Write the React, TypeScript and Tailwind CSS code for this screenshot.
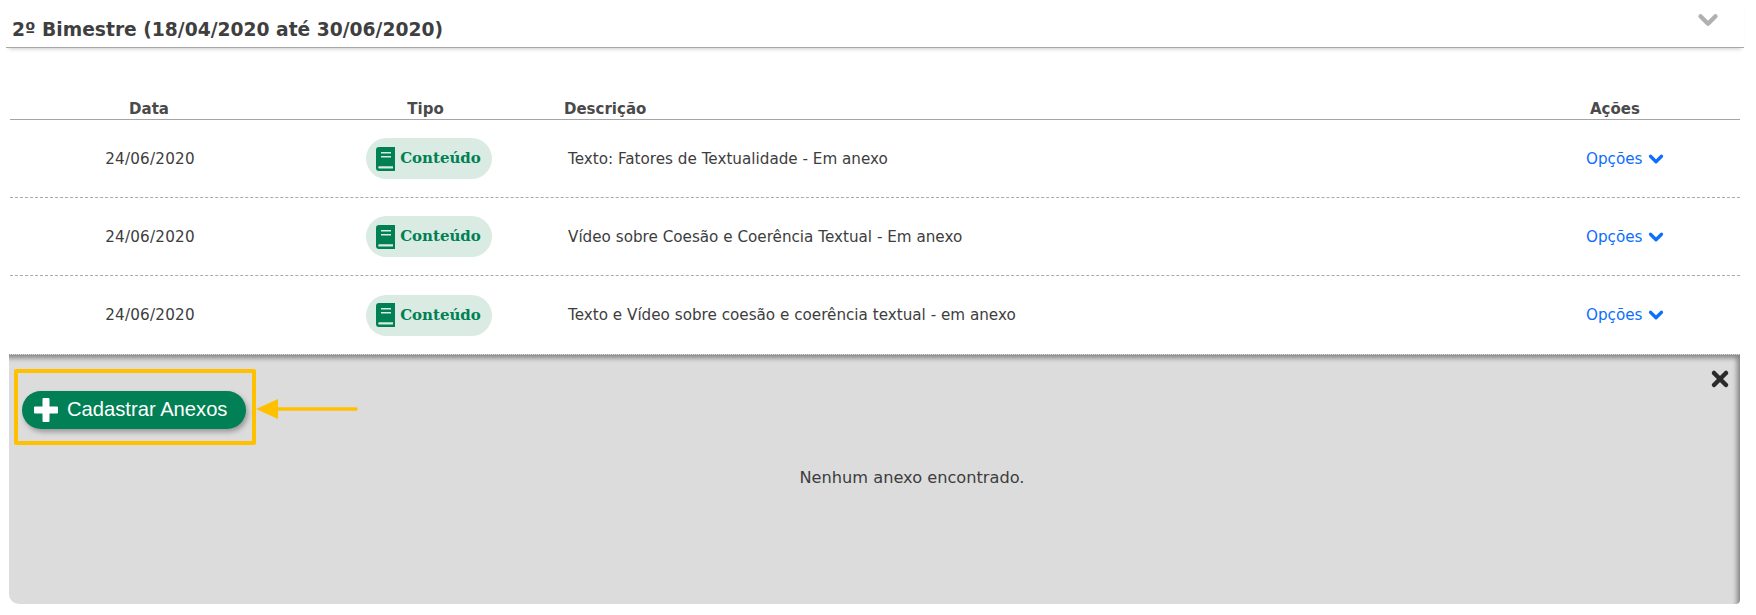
import { ChevronDown, X } from "lucide-react";

const rows = [
  "Texto: Fatores de Textualidade - Em anexo",
  "Vídeo sobre Coesão e Coerência Textual - Em anexo",
  "Texto e Vídeo sobre coesão e coerência textual - em anexo",
];

const cols = "grid grid-cols-[280px_271px_1fr_252px] items-center";

function BookIcon() {
  return (
    <svg width="19" height="24" viewBox="0 0 19 24" className="shrink-0">
      <path
        fill="#008054"
        fillRule="evenodd"
        d="M3 0h16v24H3a3 3 0 0 1-3-3V3a3 3 0 0 1 3-3zM5 5v1.6h10V5zm0 4v1.6h10V9zM3 19.2a1.3 1.3 0 0 0 0 2.4h14v-2.4z"
      />
    </svg>
  );
}

function PlusIcon() {
  return (
    <svg width="24" height="24" viewBox="0 0 24 24" className="shrink-0">
      <path fill="#ffffff" d="M8.5 1a1 1 0 0 1 1-1h5a1 1 0 0 1 1 1v7.500h7.500a1 1 0 0 1 1 1v5a1 1 0 0 1-1 1h-7.500V23a1 1 0 0 1-1 1h-5a1 1 0 0 1-1-1v-7.500H1a1 1 0 0 1-1-1v-5a1 1 0 0 1 1-1h7.500z" />
    </svg>
  );
}

function Row({ text, last }: { text: string; last: boolean }) {
  return (
    <div className={`${cols} h-[78px] text-[15.2px] text-[#3d3d3d] ${last ? "" : "border-b border-dashed border-[#aaaaaa]"}`}>
      <div className="pt-[1px] text-center tracking-[0.2px]">24/06/2020</div>
      <div className="flex justify-center pl-[6px]">
        <span className="flex h-[41px] w-[126px] items-center justify-center gap-[5px] rounded-full bg-[#d9ebe3] font-['DejaVu_Serif',serif] text-[15px] font-bold text-[#008054]">
          <BookIcon />
          Conteúdo
        </span>
      </div>
      <div className="pl-[7px] pt-[1px]">{text}</div>
      <div className="flex items-center pl-[98px] pt-[1px] text-[#0d6efd]">
        Opções
        <ChevronDown size={22} strokeWidth={3.5} className="ml-[2px]" />
      </div>
    </div>
  );
}

export default function App() {
  return (
    <div className="h-[615px] overflow-hidden bg-white font-['DejaVu_Sans',sans-serif]">
      <div className="ml-[6px] mr-[12px] flex h-[48px] items-start justify-between border-b border-[#a8a8a8] pl-[6px] pr-[21px] pt-[18px] shadow-[0_4px_4px_-3px_rgba(0,0,0,0.2)]">
        <h2 className="text-[18.7px] font-bold leading-[24px] text-[#3f3f3f]">2º Bimestre (18/04/2020 até 30/06/2020)</h2>
        <ChevronDown size={30} strokeWidth={3.5} className="-mt-[13px] text-[#b0b0b0]" />
      </div>

      <div className="ml-[10px] mr-[16px] mt-[48px]">
        <div className={`${cols} h-[24px] border-b border-[#a5a5a5] pt-[2px] text-[15px] font-bold text-[#4a4a4a]`}>
          <div className="pr-[2px] text-center">Data</div>
          <div className="text-center">Tipo</div>
          <div className="pl-[3px]">Descrição</div>
          <div className="pl-[102px]">Ações</div>
        </div>
        {rows.map((r, i) => (
          <Row key={r} text={r} last={i === rows.length - 1} />
        ))}
      </div>

      <div className="relative ml-[9px] mr-[16px] h-[250px] rounded-bl-[10px] rounded-br-[4px] border-t border-dotted border-[#999999] bg-[#dcdcdc] pl-[13px] pt-[36px] shadow-[inset_-5px_5px_5px_-2px_rgba(0,0,0,0.4)]">
        <button className="flex h-[38px] w-[224px] items-center rounded-full bg-[#008054] pl-[12px] font-['Liberation_Sans',sans-serif] text-[20.2px] text-white shadow-[2px_3px_5px_rgba(0,0,0,0.3)]">
          <PlusIcon />
          <span className="ml-[9px] -translate-y-[1px]">Cadastrar Anexos</span>
        </button>
        <p className="mt-[37px] pl-[62px] text-center text-[16.2px] text-[#3d3d3d]">Nenhum anexo encontrado.</p>

        <X size={24} strokeWidth={4.5} className="absolute right-[8px] top-[12px] text-[#2b2b2b]" />

        {/* annotation box and arrow from the original screenshot */}
        <div className="absolute left-[5px] top-[14px] h-[76px] w-[242px] rounded-[2px] border-[4px] border-[#ffc000]" />
        <svg width="102" height="26" viewBox="0 0 102 26" className="absolute left-[247px] top-[41px]">
          <path d="M0 13 L22 3 V23 Z" fill="#ffc000" />
          <path d="M20 13 H100" stroke="#ffc000" strokeWidth="3.5" strokeLinecap="round" />
        </svg>
      </div>
    </div>
  );
}
